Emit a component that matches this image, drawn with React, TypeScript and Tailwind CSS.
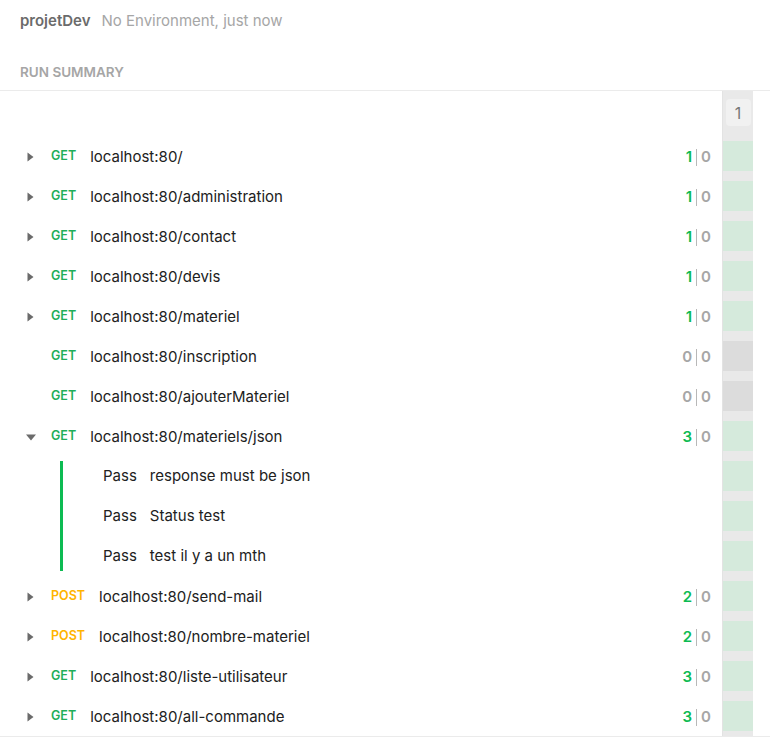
import React from "react";

type Row = {
  kind: "req" | "test";
  method?: "GET" | "POST";
  url?: string;
  caret?: "right" | "down" | null;
  pass?: number;
  fail?: number;
  name?: string;
};

const rows: Row[] = [
  { kind: "req", method: "GET", url: "localhost:80/", caret: "right", pass: 1, fail: 0 },
  { kind: "req", method: "GET", url: "localhost:80/administration", caret: "right", pass: 1, fail: 0 },
  { kind: "req", method: "GET", url: "localhost:80/contact", caret: "right", pass: 1, fail: 0 },
  { kind: "req", method: "GET", url: "localhost:80/devis", caret: "right", pass: 1, fail: 0 },
  { kind: "req", method: "GET", url: "localhost:80/materiel", caret: "right", pass: 1, fail: 0 },
  { kind: "req", method: "GET", url: "localhost:80/inscription", caret: null, pass: 0, fail: 0 },
  { kind: "req", method: "GET", url: "localhost:80/ajouterMateriel", caret: null, pass: 0, fail: 0 },
  { kind: "req", method: "GET", url: "localhost:80/materiels/json", caret: "down", pass: 3, fail: 0 },
  { kind: "test", name: "response must be json" },
  { kind: "test", name: "Status test" },
  { kind: "test", name: "test il y a un mth" },
  { kind: "req", method: "POST", url: "localhost:80/send-mail", caret: "right", pass: 2, fail: 0 },
  { kind: "req", method: "POST", url: "localhost:80/nombre-materiel", caret: "right", pass: 2, fail: 0 },
  { kind: "req", method: "GET", url: "localhost:80/liste-utilisateur", caret: "right", pass: 3, fail: 0 },
  { kind: "req", method: "GET", url: "localhost:80/all-commande", caret: "right", pass: 3, fail: 0 },
];

const Caret = ({ dir }: { dir: "right" | "down" }) =>
  dir === "right" ? (
    <svg width="7" height="10" viewBox="0 0 7 10" className="text-[#6b6b6b]">
      <path d="M0.5 0.5 L6.5 5 L0.5 9.5 Z" fill="currentColor" />
    </svg>
  ) : (
    <svg width="10" height="7" viewBox="0 0 10 7" className="text-[#6b6b6b] -ml-[1px]">
      <path d="M0 0.5 L10 0.5 L5 6.5 Z" fill="currentColor" />
    </svg>
  );

const App = () => {
  return (
    <div className="w-[770px] h-[741px] bg-white font-['Inter',sans-serif] text-[#212121] overflow-hidden">
      {/* Entête */}
      <div className="px-5 pt-[10px] flex items-baseline text-[15px]">
        <span className="font-semibold text-[#6b6b6b]">projetDev</span>
        <span className="ml-[11px] text-[#a6a6a6]">No Environment, just now</span>
      </div>
      <div className="px-5 pt-[30px] pb-[8px] border-b border-[#ebebeb] text-[13.5px] font-semibold text-[#a6a6a6] leading-[19px]">
        RUN SUMMARY
      </div>

      <div className="flex">
        <div className="flex-1">
          <div className="h-[45px]" />
          {rows.map((r, i) => {
            if (r.kind === "test") {
              const first = rows[i - 1]?.kind !== "test";
              const last = rows[i + 1]?.kind !== "test";
              return (
                <div key={i} className="h-10 flex items-center text-[15px]">
                  <div
                    className={`ml-[60px] w-[3px] bg-[#0cbb52] self-stretch ${first ? "mt-[5px]" : ""} ${last ? "mb-[5px]" : ""}`}
                  />
                  <span className="ml-[40px] pt-[2px]">Pass</span>
                  <span className="ml-[13px] pt-[2px]">{r.name}</span>
                </div>
              );
            }
            return (
              <div key={i} className="h-10 flex items-center pr-[11px] pt-[3px]">
                <div className="w-[51px] pl-[27px] flex items-center">
                  {r.caret && <Caret dir={r.caret} />}
                </div>
                <span
                  className={`text-[12.5px] font-semibold -mt-[2px] ${r.method === "GET" ? "text-[#1fae5a]" : "text-[#ffb400]"}`}
                >
                  {r.method}
                </span>
                <span className="ml-[14px] text-[15px]">{r.url}</span>
                <span className="ml-auto text-[15px] font-semibold flex items-center">
                  <span className={r.pass ? "text-[#0cbb52]" : "text-[#a6a6a6]"}>{r.pass}</span>
                  <span className="mx-[4px] w-px h-[17px] bg-[#b8b8b8]" />
                  <span className="text-[#a6a6a6]">{r.fail}</span>
                </span>
              </div>
            );
          })}
        </div>

        {/* Colonne d'itérations */}
        <div className="w-[48px] flex">
          <div className="w-[31px] border-l border-[#e3e3e3] bg-[#e9e9e9]">
            <div className="h-[45px] flex items-center justify-center pb-[1px]">
              <div className="w-[25px] h-[27px] rounded bg-[#f1f1f1] flex items-center justify-center text-[16px] text-[#777]">
                1
              </div>
            </div>
            {rows.map((r, i) => (
              <div key={i} className="h-10 py-[5px]">
                <div
                  className={`h-full ${r.kind === "req" && r.pass === 0 ? "bg-[#dcdcdc]" : "bg-[#d5eadc]"}`}
                />
              </div>
            ))}
          </div>
        </div>
      </div>
      <div className="border-t border-[#ebebeb]" />
    </div>
  );
};

export default App;
